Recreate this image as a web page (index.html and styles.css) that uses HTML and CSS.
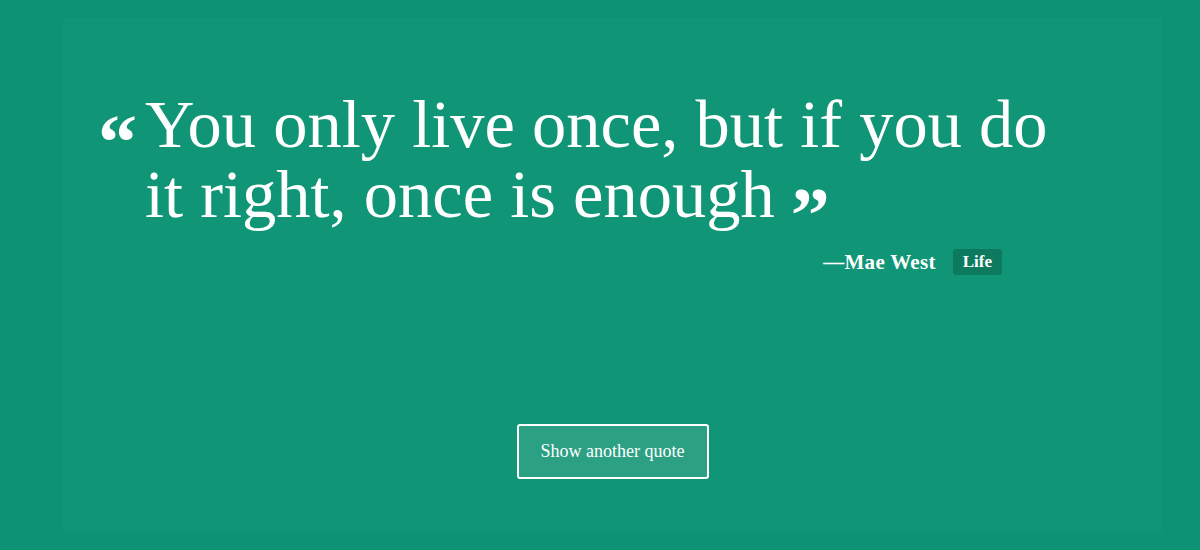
FILE: index.html
```html
<!DOCTYPE html>
<html>
<head>
<meta charset="utf-8">
<link rel="stylesheet" href="styles.css">
</head>
<body>
<main class="card">
  <blockquote class="quote">
    <span class="mark open">&ldquo;</span>
    <p class="text">You only live once, but if you do it right, once is enough<span class="mark close">&rdquo;</span></p>
  </blockquote>
  <div class="cite">
    <span class="author">&mdash;Mae West</span>
    <span class="tag">Life</span>
  </div>
  <div class="actions">
    <button class="btn">Show another quote</button>
  </div>
</main>
</body>
</html>
```

FILE: styles.css
```css
html, body {
  margin: 0;
  padding: 0;
  background: #0b9373;
  font-family: "Liberation Serif", "Times New Roman", serif;
  color: #fff;
}
.card {
  margin: 18px 38px 18px 63px;
  height: 514px;
  background: #109676;
  box-sizing: border-box;
  display: flex;
  flex-direction: column;
}
.quote {
  margin: 0;
  padding: 71px 60px 0 37px;
  display: flex;
  align-items: flex-start;
}
.mark {
  font-family: "Liberation Serif", serif;
  font-weight: 700;
  font-size: 78px;
  line-height: 0;
}
.open {
  width: 45px;
  flex: none;
  line-height: 1;
  margin-top: 14px;
  margin-left: -2px;
  margin-right: 2px;
}
.close {
  margin-left: 16px;
  vertical-align: -24px;
}
.text {
  margin: 0;
  max-width: 920px;
  font-size: 68.5px;
  line-height: 70px;
}
.cite {
  display: flex;
  justify-content: flex-end;
  align-items: center;
  gap: 17px;
  padding-right: 160px;
  margin-top: 20px;
}
.author {
  font-size: 21px;
  font-weight: 700;
  letter-spacing: 0.3px;
}
.tag {
  background: #0d7a60;
  border-radius: 3px;
  padding: 3px 10px;
  font-size: 17px;
  font-weight: 700;
}
.actions {
  display: flex;
  justify-content: center;
  margin-top: 149px;
}
.btn {
  width: 192px;
  height: 55px;
  background: #2ba083;
  border: 2px solid #fff;
  border-radius: 3px;
  color: #fff;
  font-family: "Liberation Serif", serif;
  font-size: 18px;
  cursor: pointer;
}
```
